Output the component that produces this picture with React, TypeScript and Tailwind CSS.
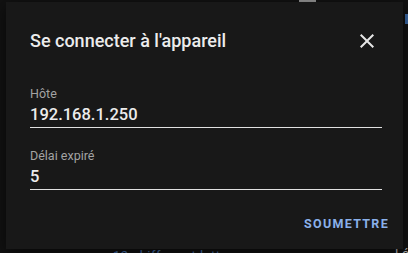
import React, { useState } from "react";

export default function App() {
  const [host, setHost] = useState("192.168.1.250");
  const [timeout, setTimeoutValue] = useState("5");

  return (
    <div
      className="relative w-[408px] h-[253px] overflow-hidden bg-[#121212]"
      style={{ fontFamily: "Roboto, 'Liberation Sans', sans-serif" }}
    >
      {/* page behind the dialog */}
      <div className="absolute left-[299px] top-0 w-[17px] h-[3px] bg-[#9a9a9a]" />
      <div className="absolute left-[405px] top-[14px] w-[3px] h-[10px] bg-[#3b6aa8]" />
      <div className="absolute left-[113px] top-[248px] text-[13px] leading-[16px] text-[#4a78b8] tracking-[0.5px]">
        12 chiffres et lettres
      </div>
      <div className="absolute left-[395px] top-[246px] text-[13px] leading-[16px] text-[#bbbbbb]">
        Lé
      </div>

      {/* dialog */}
      <div className="absolute left-[6px] top-[2px] w-[397px] h-[247px] bg-[#181818] shadow-[0_4px_16px_rgba(0,0,0,0.6)] flex flex-col">
        <div className="flex items-center justify-between pl-[24px] pr-[24px] pt-[27px]">
          <h2 className="text-[18px] leading-[24px] font-medium text-[#ececec]">
            Se connecter à l'appareil
          </h2>
          <button className="w-[24px] h-[24px] flex items-center justify-center text-[#e6e6e6]">
            <svg width="24" height="24" viewBox="0 0 24 24" fill="currentColor">
              <path d="M19 6.41 17.59 5 12 10.59 6.41 5 5 6.41 10.59 12 5 17.59 6.41 19 12 13.41 17.59 19 19 17.59 13.41 12z" />
            </svg>
          </button>
        </div>

        <div className="flex flex-col px-[24px] pt-[33px] gap-[20px]">
          <Field label="Hôte" value={host} onChange={setHost} />
          <Field label="Délai expiré" value={timeout} onChange={setTimeoutValue} />
        </div>

        <div className="flex justify-end px-[14px] pt-[26px]">
          <button className="text-[12.5px] leading-[16px] font-bold tracking-[1.3px] text-[#8ab0ea]">
            SOUMETTRE
          </button>
        </div>
      </div>
    </div>
  );
}

const Field = ({
  label,
  value,
  onChange,
}: {
  label: string;
  value: string;
  onChange: (v: string) => void;
}) => (
  <div className="flex flex-col w-[352px]">
    <label className="text-[12.5px] leading-[16px] mb-[2px] text-[#a3a3a3]">{label}</label>
    <input
      value={value}
      onChange={(e) => onChange(e.target.value)}
      className="bg-transparent outline-none text-[16.5px] leading-[22px] font-medium text-[#ececec] pb-[1px] border-b border-[#e0e0e0]"
    />
  </div>
);
